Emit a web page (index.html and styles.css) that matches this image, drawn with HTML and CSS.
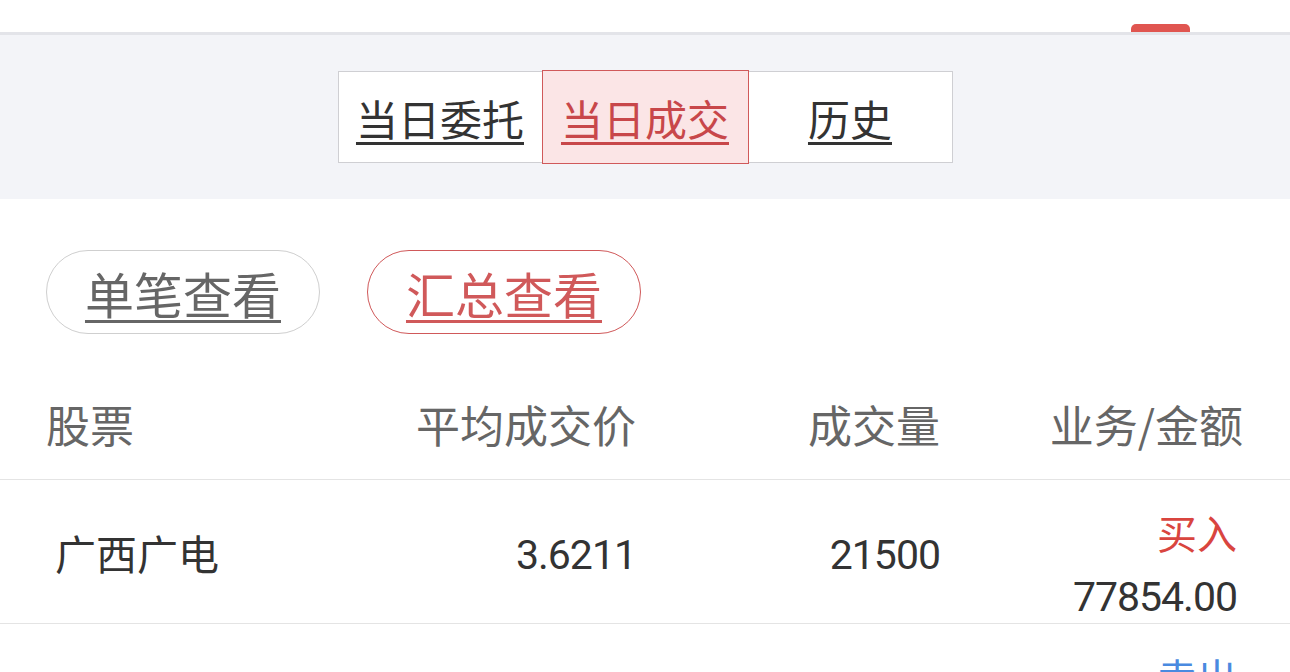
FILE: index.html
```html
<!DOCTYPE html>
<html lang="zh-CN">
<head>
  <meta charset="UTF-8" />
  <meta name="viewport" content="width=device-width, initial-scale=1.0"/>
  <title>当日成交</title>
  <link rel="stylesheet" href="styles.css">
</head>
<body>
  <div class="topbar">
    <span class="tab-indicator"></span>
  </div>

  <div class="segment-band">
    <div class="segment">
      <a class="seg-item">当日委托</a>
      <a class="seg-item active">当日成交</a>
      <a class="seg-item">历史</a>
    </div>
  </div>

  <div class="pills">
    <a class="pill">单笔查看</a>
    <a class="pill active">汇总查看</a>
  </div>

  <div class="table">
    <div class="row head">
      <div class="cell name">股票</div>
      <div class="cell">平均成交价</div>
      <div class="cell">成交量</div>
      <div class="cell">业务/金额</div>
    </div>
    <div class="row data">
      <div class="cell name">广西广电</div>
      <div class="cell num">3.6211</div>
      <div class="cell num">21500</div>
      <div class="cell last">
        <span class="biz buy">买入</span>
        <span class="num">77854.00</span>
      </div>
    </div>
    <div class="row data">
      <div class="cell name">&nbsp;</div>
      <div class="cell num">&nbsp;</div>
      <div class="cell num">&nbsp;</div>
      <div class="cell last">
        <span class="biz sell">卖出</span>
        <span class="num">&nbsp;</span>
      </div>
    </div>
  </div>
</body>
</html>
```

FILE: styles.css
```css
body {
  margin: 0;
  padding: 0;
  background: #fff;
  font-family: "Noto Sans CJK SC", "Noto Sans", sans-serif;
  color: #333;
  overflow: hidden;
}
.topbar {
  height: 32px;
  display: flex;
  justify-content: flex-end;
  align-items: flex-end;
  padding-right: 100px;
  border-bottom: 3px solid #e3e4e9;
}
.tab-indicator {
  width: 59px;
  height: 8px;
  background: #e05550;
  border-radius: 5px 5px 0 0;
}
.segment-band {
  background: #f3f4f8;
  height: 164px;
  display: flex;
  justify-content: center;
  align-items: flex-start;
}
.segment {
  margin-top: 36px;
  display: flex;
  border: 1px solid #cfcfd3;
  background: #fff;
  height: 90px;
}
.seg-item {
  width: 203px;
  display: flex;
  align-items: center;
  justify-content: center;
  font-size: 42px;
  color: #333;
  text-decoration: underline;
  text-decoration-thickness: 3px;
  text-underline-offset: 6px;
  box-sizing: border-box;
}
.seg-item.active {
  width: 207px;
  margin: -2px 0;
  height: 94px;
  border: 1px solid #d0595a;
  background: #fbe5e6;
  color: #c8474a;
}
.pills {
  display: flex;
  gap: 47px;
  padding: 51px 0 0 46px;
}
.pill {
  width: 274px;
  height: 84px;
  box-sizing: border-box;
  border: 1.5px solid #cfcfcf;
  border-radius: 42px;
  display: flex;
  align-items: center;
  justify-content: center;
  font-size: 49px;
  color: #666;
  text-decoration: underline;
  text-decoration-thickness: 3px;
  text-underline-offset: 6px;
}
.pill.active {
  border-color: #d0595a;
  color: #d0595a;
}
.row {
  display: grid;
  grid-template-columns: 290px 300px 304px 1fr;
  padding: 0 47px 0 46px;
  align-items: center;
  border-bottom: 1.5px solid #e4e4e4;
}
.row.head {
  height: 146px;
  box-sizing: border-box;
  padding-top: 34px;
  font-size: 44px;
  color: #666;
}
.row.data {
  height: 143px;
  font-size: 41px;
  color: #333;
}
.cell {
  text-align: right;
}
.cell.name {
  text-align: left;
}
.row.data .cell.name {
  padding-left: 9px;
}
.num {
  font-family: Roboto, "Noto Sans", sans-serif;
  font-size: 41px;
  letter-spacing: -1px;
  color: #333;
}
.row.data .cell.num {
  margin-top: 6px;
}
.cell.last {
  display: flex;
  flex-direction: column;
  align-items: flex-end;
  padding-right: 6px;
  gap: 13px;
  margin-top: 22px;
}
.biz {
  font-size: 40px;
  line-height: 56px;
}
.buy {
  color: #d9453f;
}
.sell {
  color: #4a8ae0;
}
```
